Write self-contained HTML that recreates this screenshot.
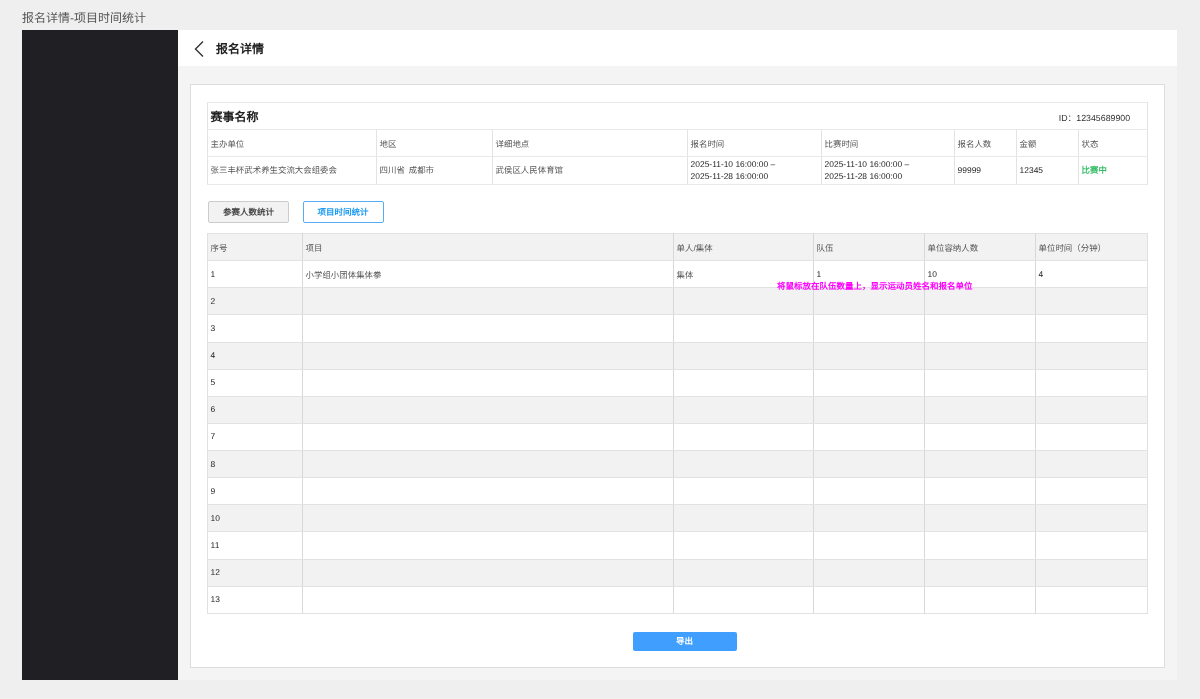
<!DOCTYPE html>
<html lang="zh-CN"><head><meta charset="utf-8">
<style>
*{margin:0;padding:0;box-sizing:border-box;}
html,body{width:1200px;height:699px;overflow:hidden;background:#efefef;font-family:"Liberation Sans",sans-serif;color:#333;text-rendering:geometricPrecision;}
.abs{position:absolute;}
#ptitle{left:22px;top:10px;font-size:12px;line-height:16px;color:#555;white-space:nowrap;}
#side{left:22px;top:30px;width:156px;height:650px;background:#1f1f24;}
#hdr{left:178px;top:30px;width:999px;height:36px;background:#fff;}
#content{left:178px;top:66px;width:999px;height:614px;background:#f4f4f4;}
#card{left:190px;top:84px;width:975px;height:584px;background:#fff;border:1px solid #ddd;}
#back{left:194px;top:41px;}
#htitle{left:216px;top:41px;font-size:12px;line-height:16px;font-weight:bold;color:#222;white-space:nowrap;}
table{border-collapse:collapse;table-layout:fixed;position:absolute;}
td{border:1px solid #e9e9e9;border-left-color:#e3e3e3;border-right-color:#e3e3e3;font-size:8.44px;color:#555;padding:0 0 0 2.6px;vertical-align:middle;white-space:nowrap;overflow:visible;}
#info{left:207px;top:102px;width:940px;}
#info td{height:27px;}
#info tr.r2 td{padding-top:1px;}
#info tr.r3 td{padding-bottom:1px;}
#main{left:207px;top:233px;width:940px;}
#main td{height:27.14px;border-color:#e2e2e2 #d8d8d8;padding-top:1px;}
#main td:first-child{border-left-color:#e0e0e0;}
#main td:last-child{border-right-color:#e0e0e0;}
#main tr.alt td{background:#f2f2f2;}
#main td.n{color:#222;padding-top:0;padding-bottom:1px;}
.btn{position:absolute;top:201px;height:22px;width:81px;border-radius:2px;font-size:8.5px;font-weight:bold;text-align:center;line-height:20px;}
#b1{left:208px;background:#f2f2f2;border:1px solid #ccc;color:#4a4a4a;}
#b2{left:302.5px;background:#fff;border:1px solid #55adf5;color:#1e9bf0;}
#exp{left:632.5px;top:632px;width:104px;height:19px;background:#409eff;border-radius:2px;color:#fff;font-size:8.5px;font-weight:bold;text-align:center;line-height:19px;}
#note{left:777px;top:280px;font-size:8.5px;line-height:12px;font-weight:bold;color:#f0f;white-space:nowrap;}
</style></head><body><div style="position:absolute;left:0;top:0;width:1200px;height:699px;will-change:transform;">
<div id="ptitle" class="abs">报名详情-项目时间统计</div>
<div id="side" class="abs"></div>
<div id="hdr" class="abs"></div>
<div id="content" class="abs"></div>
<div id="card" class="abs"></div>
<svg id="back" class="abs" width="10" height="16" viewBox="0 0 10 16"><path d="M9 0.5 L1.5 8 L9 15.5" fill="none" stroke="#333" stroke-width="1.4"/></svg>
<div id="htitle" class="abs">报名详情</div>

<table id="info">
<colgroup><col style="width:169px"><col style="width:116px"><col style="width:195px"><col style="width:134px"><col style="width:133px"><col style="width:62px"><col style="width:62px"><col style="width:69px"></colgroup>
<tr><td colspan="8" style="position:relative;"><span style="font-size:12px;font-weight:bold;color:#222;position:relative;top:0px;">赛事名称</span><span style="position:absolute;right:17px;top:8px;font-size:8.8px;color:#333;">ID：12345689900</span></td></tr>
<tr class="r2"><td>主办单位</td><td>地区</td><td>详细地点</td><td>报名时间</td><td>比赛时间</td><td>报名人数</td><td>金额</td><td>状态</td></tr>
<tr class="r3" style="height:28px"><td style="height:28px">张三丰杯武术养生交流大会组委会</td><td>四川省 <span style="margin-left:1.5px">成都市</span></td><td>武侯区人民体育馆</td><td style="line-height:12px;color:#222;">2025-11-10 16:00:00 –<br>2025-11-28 16:00:00</td><td style="line-height:12px;color:#222;">2025-11-10 16:00:00 –<br>2025-11-28 16:00:00</td><td style="color:#222;">99999</td><td style="color:#222;">12345</td><td style="color:#3abf69;font-weight:bold;">比赛中</td></tr>
</table>

<div id="b1" class="btn">参赛人数统计</div>
<div id="b2" class="btn">项目时间统计</div>

<table id="main">
<colgroup><col style="width:95px"><col style="width:371px"><col style="width:140px"><col style="width:111px"><col style="width:111px"><col style="width:112px"></colgroup>
<tr class="alt"><td>序号</td><td>项目</td><td>单人/集体</td><td>队伍</td><td>单位容纳人数</td><td>单位时间（分钟）</td></tr>
<tr><td class="n">1</td><td>小学组小团体集体拳</td><td>集体</td><td class="n">1</td><td class="n">10</td><td class="n">4</td></tr>
<tr class="alt"><td class="n">2</td><td></td><td></td><td></td><td></td><td></td></tr>
<tr><td class="n">3</td><td></td><td></td><td></td><td></td><td></td></tr>
<tr class="alt"><td class="n">4</td><td></td><td></td><td></td><td></td><td></td></tr>
<tr><td class="n">5</td><td></td><td></td><td></td><td></td><td></td></tr>
<tr class="alt"><td class="n">6</td><td></td><td></td><td></td><td></td><td></td></tr>
<tr><td class="n">7</td><td></td><td></td><td></td><td></td><td></td></tr>
<tr class="alt"><td class="n">8</td><td></td><td></td><td></td><td></td><td></td></tr>
<tr><td class="n">9</td><td></td><td></td><td></td><td></td><td></td></tr>
<tr class="alt"><td class="n">10</td><td></td><td></td><td></td><td></td><td></td></tr>
<tr><td class="n">11</td><td></td><td></td><td></td><td></td><td></td></tr>
<tr class="alt"><td class="n">12</td><td></td><td></td><td></td><td></td><td></td></tr>
<tr><td class="n">13</td><td></td><td></td><td></td><td></td><td></td></tr>
</table>
<div id="note" class="abs">将鼠标放在队伍数量上，显示运动员姓名和报名单位</div>
<div id="exp" class="abs">导出</div>
</div></body></html>
